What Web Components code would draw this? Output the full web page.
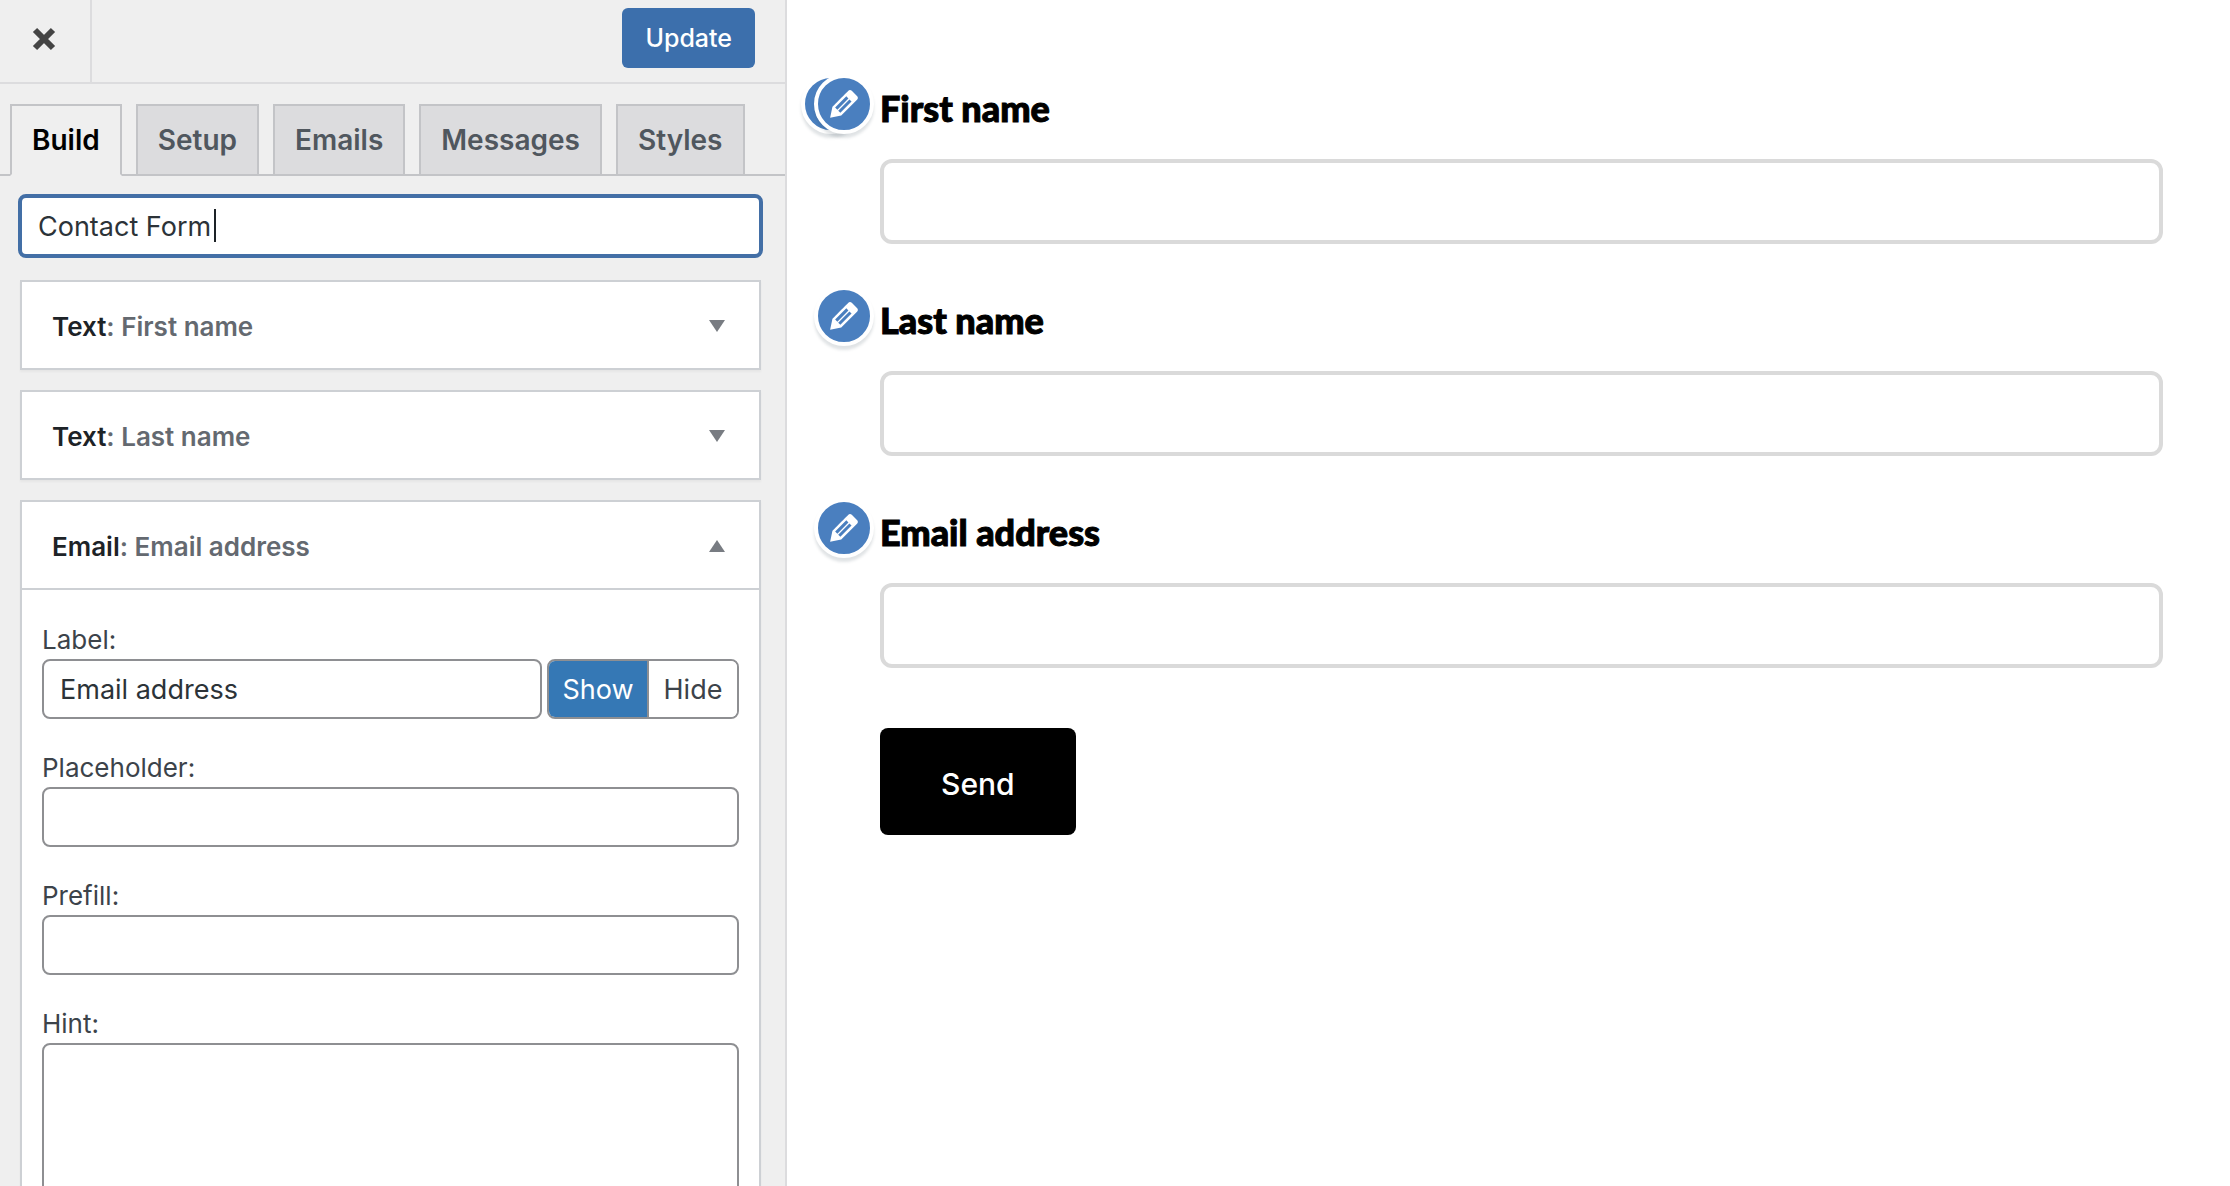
<!DOCTYPE html>
<html lang="en">
<head>
<meta charset="utf-8">
<title>Contact Form</title>
<style>
  html, body { margin: 0; height: 100%; }
  body { font-family: Inter, "Liberation Sans", sans-serif; background: #fff; overflow: hidden; }
</style>
</head>
<body>
<form-customizer></form-customizer>

<script>
const define = (name, html, setup) => {
  const template = document.createElement('template');
  template.innerHTML = `<style>*{box-sizing:border-box}button,input,textarea{font:inherit;margin:0}</style>` + html;
  customElements.define(name, class extends HTMLElement {
    constructor() {
      super();
      this.attachShadow({ mode: 'open' }).append(template.content.cloneNode(true));
    }
    connectedCallback() { if (setup) setup(this, this.shadowRoot); }
  });
};

define('panel-header', `
  <style>
    :host { display: flex; justify-content: space-between; height: 84px; border-bottom: 2px solid #dcdcde; }
    .close { width: 92px; padding: 0 2px 4px 0; border: 0; border-right: 2px solid #dcdcde; background: none;
      display: flex; align-items: center; justify-content: center; }
    .update { align-self: flex-start; height: 60px; margin: 8px 30px 0 0; padding: 0 23px; border: 0;
      border-radius: 6px; background: #3c6fac; color: #fff; font-size: 25px; font-weight: 500; }
  </style>
  <button class="close" type="button" aria-label="Close">
    <svg width="24" height="24" viewBox="0 0 24 24"><path d="M3 3 21 21M21 3 3 21" stroke="#444" stroke-width="6"/></svg>
  </button>
  <button class="update" type="button">Update</button>`);

define('panel-tab', `
  <style>
    :host { display: block; }
    button { display: block; height: 72px; padding: 0 20px; border: 2px solid #c3c4c7; background: #dcdcde;
      color: #50575e; font-size: 28px; font-weight: 600; }
    :host([active]) button { background: #efefef; border-bottom-color: #efefef; color: #000; }
  </style>
  <button type="button" role="tab"><slot></slot></button>`);

define('panel-tabs', `
  <style>
    :host { display: flex; gap: 14px; height: 92px; padding: 20px 10px 0; border-bottom: 2px solid #c3c4c7; }
  </style>
  <slot></slot>`);

define('form-title', `
  <style>
    :host { display: block; position: relative; margin: 18px 22px 0 18px; }
    input { display: block; width: 100%; height: 64px; padding: 0 16px; border: 4px solid #436fa6; border-radius: 8px;
      background: #fff; color: #2c3338; font-size: 27px; outline: 0; }
    i { position: absolute; left: 196px; top: 15px; width: 2px; height: 33px; background: #1d2327; }
  </style>
  <input type="text" value="Contact Form" aria-label="Form title"><i></i>`);

define('field-card', `
  <style>
    :host { display: block; margin: 0 24px 0 20px; border: 2px solid #cdd0d4; background: #fff;
      box-shadow: 0 2px 2px rgba(0,0,0,.04); }
    button { display: flex; align-items: center; justify-content: space-between; width: 100%; height: 86px;
      padding: 2px 34px 0 30px; border: 0; background: none; color: #646970; font-size: 26px; font-weight: 600; }
    b { font-weight: 600; color: #1d2327; }
    svg { fill: #787c82; }
    .body { display: none; }
    :host([open]) button { height: 88px; border-bottom: 2px solid #cdd0d4; }
    :host([open]) svg { transform: rotate(180deg); }
    :host([open]) .body { display: flex; flex-direction: column; gap: 32px; padding: 33px 20px 40px; }
  </style>
  <button type="button"><span><b></b>: <span class="name"></span></span>
    <svg width="16" height="12" viewBox="0 0 16 12"><path d="M0 0h16L8 12z"/></svg></button>
  <div class="body"><slot></slot></div>`, (el, root) => {
    root.querySelector('b').textContent = el.getAttribute('type');
    root.querySelector('.name').textContent = el.getAttribute('name');
  });

define('setting-row', `
  <style>
    :host { display: block; }
    label { display: block; height: 36px; line-height: 34px; color: #3c434a; font-size: 26px; }
    .row { display: flex; gap: 5px; }
    input, textarea { display: block; flex: 1; min-width: 0; height: 60px; padding: 0 16px;
      border: 2px solid #8e8f92; border-radius: 8px; background: #fff; color: #2c3338; font-size: 27px; outline: 0; }
    textarea { height: 240px; resize: none; }
  </style>
  <label for="control"></label>
  <div class="row"><slot></slot></div>`, (el, root) => {
    root.querySelector('label').textContent = el.getAttribute('label');
    const control = document.createElement(el.hasAttribute('multiline') ? 'textarea' : 'input');
    control.id = 'control';
    control.value = el.getAttribute('value') || '';
    root.querySelector('.row').prepend(control);
  });

define('show-toggle', `
  <style>
    :host { display: flex; box-sizing: border-box; width: 192px; height: 60px; border: 2px solid #8e8f92;
      border-radius: 8px; overflow: hidden; }
    button { flex: 1; padding: 0; border: 0; background: #fff; color: #3c434a; font-size: 27px; }
    .on { flex: none; width: 100px; background: #3578b5; color: #fff; border-right: 2px solid #8e8f92; }
  </style>
  <button class="on" type="button" aria-pressed="true">Show</button>
  <button type="button" aria-pressed="false">Hide</button>`);

define('edit-shortcut', `
  <style>
    :host { display: block; width: 60px; height: 60px; }
    button { display: flex; align-items: center; justify-content: center; width: 60px; height: 60px; padding: 0;
      border: 4px solid #fff; border-radius: 50%; background: #4a7fbf;
      box-shadow: 0 4px 3px rgba(46,68,83,.15); }
    svg { flex: none; fill: #fff; }
  </style>
  <button type="button" aria-label="Edit">
    <svg width="40" height="40" viewBox="0 0 20 20"><path d="M13.89 3.39l2.71 2.72c.46.46.42 1.24.03 1.64l-8.01 8.02-5.56 1.16 1.16-5.58s7.6-7.63 7.99-8.03c.39-.39 1.22-.39 1.68.07zm-2.73 2.79l-5.59 5.61 1.11 1.11 5.54-5.65zm-2.97 8.23l5.58-5.6-1.07-1.08-5.59 5.6z"/></svg>
  </button>`);

define('preview-field', `
  <style>
    :host { display: block; position: relative; }
    label { display: block; height: 85px; padding-top: 4px; color: #000;
      font: 900 36px/60px Lato, "Liberation Sans", sans-serif; -webkit-text-stroke: 1px #000; }
    input { display: block; width: 100%; height: 85px; padding: 0 24px; border: 4px solid #dadada; border-radius: 12px;
      background: #fff; font-size: 30px; outline: 0; }
    ::slotted(edit-shortcut) { position: absolute; left: -66px; top: 0; }
    ::slotted(.under) { left: -79px; }
  </style>
  <slot></slot>
  <label for="control"></label>
  <input id="control" type="text">`, (el, root) => {
    root.querySelector('label').textContent = el.getAttribute('label');
  });

define('send-button', `
  <style>
    :host { display: block; margin-top: 18px; }
    button { height: 107px; padding: 4px 61px 0; border: 0; border-radius: 8px; background: #000; color: #fff;
      font-size: 30px; font-weight: 500; }
  </style>
  <button type="submit"><slot></slot></button>`);

define('form-customizer', `
  <style>
    :host { display: flex; height: 100vh; }
    aside { flex: none; width: 787px; overflow: hidden; background: #efefef; border-right: 2px solid #dcdcde; }
    .cards { display: flex; flex-direction: column; gap: 20px; padding-top: 22px; }
    main { flex: 1; min-width: 0; padding: 74px 67px 0 93px; overflow: hidden; }
    form { display: flex; flex-direction: column; gap: 42px; }
  </style>
  <aside>
    <panel-header></panel-header>
    <panel-tabs role="tablist">
      <panel-tab active>Build</panel-tab>
      <panel-tab>Setup</panel-tab>
      <panel-tab>Emails</panel-tab>
      <panel-tab>Messages</panel-tab>
      <panel-tab>Styles</panel-tab>
    </panel-tabs>
    <form-title></form-title>
    <div class="cards">
      <field-card type="Text" name="First name"></field-card>
      <field-card type="Text" name="Last name"></field-card>
      <field-card type="Email" name="Email address" open>
        <setting-row label="Label:" value="Email address"><show-toggle></show-toggle></setting-row>
        <setting-row label="Placeholder:"></setting-row>
        <setting-row label="Prefill:"></setting-row>
        <setting-row label="Hint:" multiline></setting-row>
      </field-card>
    </div>
  </aside>
  <main>
    <form>
      <preview-field label="First name"><edit-shortcut class="under"></edit-shortcut><edit-shortcut></edit-shortcut></preview-field>
      <preview-field label="Last name"><edit-shortcut></edit-shortcut></preview-field>
      <preview-field label="Email address"><edit-shortcut></edit-shortcut></preview-field>
      <send-button>Send</send-button>
    </form>
  </main>`);
</script>
</body>
</html>
